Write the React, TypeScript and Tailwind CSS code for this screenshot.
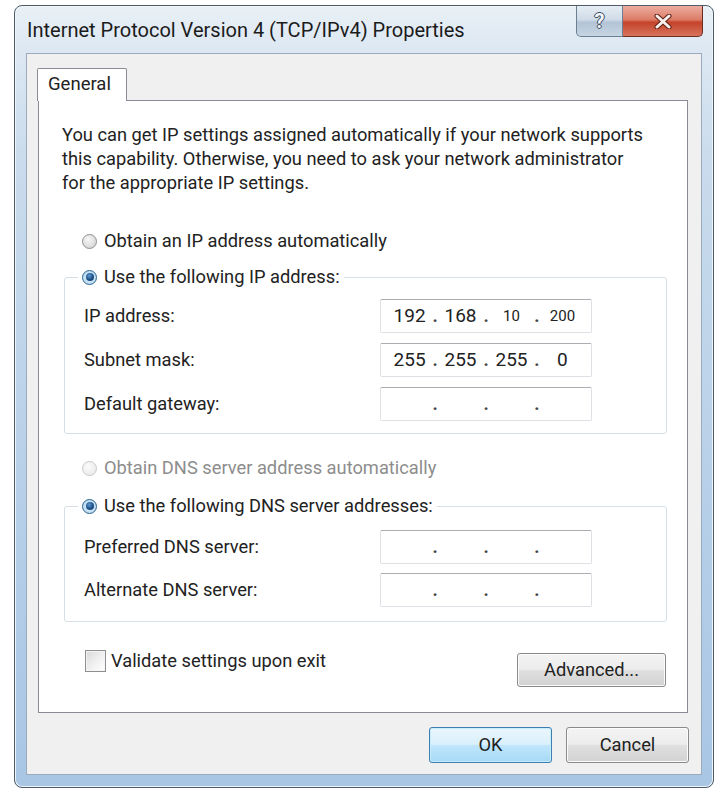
import React from "react";

type Seg = { v: string; sm?: boolean };

const ipAddress: Seg[] = [{ v: "192" }, { v: "168" }, { v: "10", sm: true }, { v: "200", sm: true }];
const subnetMask: Seg[] = [{ v: "255" }, { v: "255" }, { v: "255" }, { v: "0" }];
const empty: Seg[] = [{ v: "" }, { v: "" }, { v: "" }, { v: "" }];

function Radio({ checked, disabled }: { checked?: boolean; disabled?: boolean }) {
  if (checked) {
    return (
      <span className="flex items-center justify-center w-[15px] h-[15px] rounded-full border border-[#2c628b] bg-[radial-gradient(circle,#e6f3fc_0%,#bcdcf3_70%,#9cc6e6_100%)]">
        <span className="w-[8px] h-[8px] rounded-full bg-[radial-gradient(circle_at_40%_35%,#5e9ad0_0%,#1d4f86_55%,#0c2f5a_100%)]" />
      </span>
    );
  }
  if (disabled) {
    return (
      <span className="block w-[15px] h-[15px] rounded-full border border-[#c9c9c9] bg-[radial-gradient(circle_at_40%_35%,#fbfbfb,#e6e6e6)]" />
    );
  }
  return (
    <span className="block w-[15px] h-[15px] rounded-full border border-[#8e8f8f] bg-[radial-gradient(circle_at_40%_35%,#f7f7f7,#cdcdcd)]" />
  );
}

function IpBox({ parts }: { parts: Seg[] }) {
  return (
    <div className="flex items-center w-[212px] h-[34px] px-[8px] bg-white border border-[#dde1e6] border-t-[#abadb3] rounded-[2px] text-[#222]">
      {parts.map((p, i) => (
        <React.Fragment key={i}>
          {i > 0 && <span className="w-[10px] text-center text-[18px] font-bold leading-none text-[#444]">.</span>}
          <span className={p.sm ? "w-[42px] text-center text-[15px]" : "w-[42px] text-center text-[19px]"}>{p.v}</span>
        </React.Fragment>
      ))}
    </div>
  );
}

function Row({ label, parts }: { label: string; parts: Seg[] }) {
  return (
    <div className="flex items-center h-[34px]">
      <span className="w-[315px] pl-[19px] text-[18.3px] text-[#222]">{label}</span>
      <IpBox parts={parts} />
    </div>
  );
}

function WinButton({ children, primary, className }: { children: React.ReactNode; primary?: boolean; className?: string }) {
  return (
    <button
      className={
        (primary
          ? "border-[#3c7fb1] bg-[linear-gradient(180deg,#eaf6fd_0%,#d9f0fc_48%,#bee6fd_52%,#a7d9f5_100%)] shadow-[inset_0_0_0_1px_#c9ecfb]"
          : "border-[#8a8a8a] bg-[linear-gradient(180deg,#f4f4f4_0%,#ececec_48%,#dfdfdf_52%,#d2d2d2_100%)] shadow-[inset_0_0_0_1px_#fbfbfb]") +
        " flex items-center justify-center border rounded-[3px] text-[18.3px] text-[#222] " +
        (className ?? "")
      }
    >
      {children}
    </button>
  );
}

export default function App() {
  return (
    <div className="min-h-[802px] bg-white pt-[5px] pl-[14px] font-['Roboto','Liberation_Sans',sans-serif]">
      {/* ventana */}
      <div className="flex flex-col w-[700px] h-[783px] px-[11px] pb-[12px] rounded-[8px] border border-[#4f5b68] bg-[linear-gradient(180deg,#e9f0f6_0%,#dce7f2_6%,#c9dbec_20%,#b8d0e8_60%,#a9c6e5_100%)] shadow-[inset_0_0_0_1px_#eef4fa]">
        {/* barra de titulo */}
        <div className="flex h-[47px]">
          <div className="pt-[13px] pl-[1px] text-[20px] leading-[22px] text-[#1b1b1b]">
            Internet Protocol Version 4 (TCP/IPv4) Properties
          </div>
          <div className="flex ml-auto -mr-[1px] h-[31px]">
            <div className="flex items-center justify-center w-[47px] border border-t-0 border-[#6d7f93] rounded-bl-[5px] bg-[linear-gradient(180deg,#e6edf4_0%,#cfdbe7_45%,#b3c4d6_55%,#c7d5e3_100%)]">
              <span className="text-[20px] font-bold leading-none text-[#f4f7fa] [text-shadow:1px_0_0_#3a4a5e,-1px_0_0_#3a4a5e,0_1px_0_#3a4a5e,0_-1px_0_#3a4a5e]">?</span>
            </div>
            <div className="flex items-center justify-center w-[80px] border border-t-0 border-l-0 border-[#6b2c22] rounded-br-[5px] bg-[linear-gradient(180deg,#ecaea0_0%,#dc7c67_45%,#c5432b_55%,#d8735c_100%)]">
              <svg width="18" height="15" viewBox="0 0 18 15">
                <path d="M3 2 L15 13 M15 2 L3 13" stroke="#5a1e14" strokeWidth="5" strokeLinecap="round" />
                <path d="M3 2 L15 13 M15 2 L3 13" stroke="#f8efec" strokeWidth="3" strokeLinecap="round" />
              </svg>
            </div>
          </div>
        </div>

        {/* area cliente */}
        <div className="flex-1 flex flex-col bg-[#f0f0f0] border border-[#9aabbd] pt-[14px]">
          {/* pestaña */}
          <div className="flex pl-[10px]">
            <div className="relative z-10 -mb-[1px] flex items-center w-[90px] h-[33px] pl-[10px] bg-white border border-b-0 border-[#898c95] rounded-t-[2px] text-[18.5px] text-[#222]">
              General
            </div>
          </div>

          {/* panel */}
          <div className="flex flex-col ml-[11px] w-[650px] h-[613px] bg-white border border-[#898c95] text-[#222]">
            <p className="pt-[22px] pl-[23px] text-[18.3px] leading-[24px]">
              You can get IP settings assigned automatically if your network supports
              <br />
              this capability. Otherwise, you need to ask your network administrator
              <br />
              for the appropriate IP settings.
            </p>

            <div className="flex items-center gap-[7px] h-[24px] mt-[34px] ml-[43px] text-[18.3px]">
              <Radio />
              <span>Obtain an IP address automatically</span>
            </div>

            <fieldset className="mt-[12px] ml-[25px] w-[603px] pt-[10px] pb-[12px] border border-[#d5dfe5] rounded-[3px] flex flex-col gap-[10px]">
              <legend className="ml-[13px] px-[4px]">
                <span className="flex items-center gap-[7px] h-[24px] text-[18.3px]">
                  <Radio checked />
                  <span>Use the following IP address:</span>
                </span>
              </legend>
              <Row label="IP address:" parts={ipAddress} />
              <Row label="Subnet mask:" parts={subnetMask} />
              <Row label="Default gateway:" parts={empty} />
            </fieldset>

            <div className="flex items-center gap-[7px] h-[24px] mt-[22px] ml-[43px] text-[18.3px] text-[#8d8d8d]">
              <Radio disabled />
              <span>Obtain DNS server address automatically</span>
            </div>

            <fieldset className="mt-[14px] ml-[25px] w-[603px] pt-[12px] pb-[14px] border border-[#d5dfe5] rounded-[3px] flex flex-col gap-[9px]">
              <legend className="ml-[13px] px-[4px]">
                <span className="flex items-center gap-[7px] h-[24px] text-[18.3px]">
                  <Radio checked />
                  <span>Use the following DNS server addresses:</span>
                </span>
              </legend>
              <Row label="Preferred DNS server:" parts={empty} />
              <Row label="Alternate DNS server:" parts={empty} />
            </fieldset>

            <div className="flex items-start mt-[28px] ml-[46px]">
              <span className="w-[21px] h-[22px] border border-[#8f8f8f] bg-[linear-gradient(135deg,#d9d9d9_0%,#f3f3f3_60%,#ffffff_100%)] shadow-[inset_0_0_0_1px_#f4f4f4]" />
              <span className="ml-[5px] text-[18.3px] leading-[22px]">Validate settings upon exit</span>
              <WinButton className="ml-auto mr-[21px] mt-[3px] w-[149px] h-[34px]">Advanced...</WinButton>
            </div>
          </div>

          {/* botones */}
          <div className="flex justify-end gap-[14px] mt-[14px] pr-[12px]">
            <WinButton primary className="w-[123px] h-[36px]">OK</WinButton>
            <WinButton className="w-[123px] h-[36px]">Cancel</WinButton>
          </div>
        </div>
      </div>
    </div>
  );
}
